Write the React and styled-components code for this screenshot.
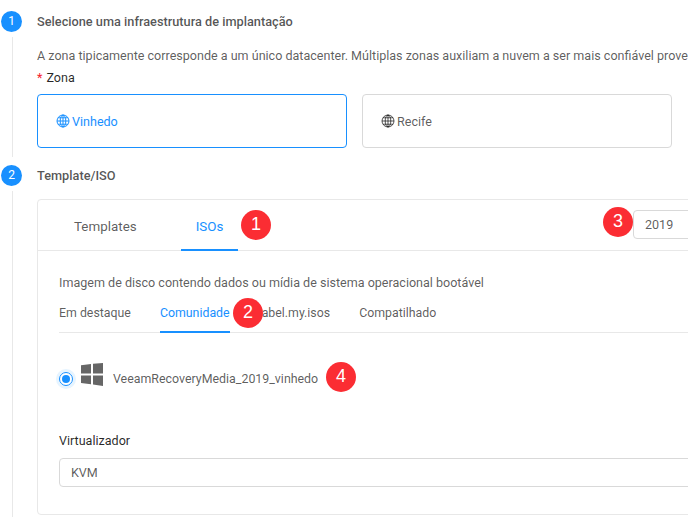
import React from "react";
import styled, { createGlobalStyle } from "styled-components";

const GlobalStyle = createGlobalStyle`
  html, body {
    margin: 0;
    padding: 0;
    background: #fff;
    overflow: hidden;
  }
  body {
    font-family: Roboto, "Open Sans", sans-serif;
    font-size: 12.55px;
    color: rgba(0, 0, 0, 0.65);
  }
`;

const Page = styled.div`
  position: relative;
  width: 688px;
  height: 517px;
  overflow: hidden;
  padding: 11px 0 0 1px;
  box-sizing: border-box;
`;

const Step = styled.div`
  display: flex;
  gap: 15px;
  height: ${(p) => p.$height}px;
`;

const Rail = styled.div`
  display: flex;
  flex-direction: column;
  align-items: center;
  width: 21px;
  flex: none;
`;

const StepDot = styled.div`
  width: 21px;
  height: 21px;
  border-radius: 50%;
  background: #1890ff;
  color: #fff;
  font-size: 12px;
  line-height: 21px;
  text-align: center;
  flex: none;
`;

const RailLine = styled.div`
  width: 1px;
  flex: 1;
  margin: 5px 0 8px 2px;
  background: #e8e8e8;
`;

const StepBody = styled.div`
  flex: none;
  width: 860px;
`;

const StepTitle = styled.div`
  font-weight: 500;
  font-size: 12.75px;
  line-height: 21px;
  color: rgba(0, 0, 0, 0.68);
`;

const Description = styled.div`
  margin-top: 13px;
  line-height: 22px;
  white-space: nowrap;
`;

const FieldLabel = styled.div`
  line-height: 22px;
  color: rgba(0, 0, 0, 0.85);
`;

const Required = styled.span`
  color: #f5222d;
  margin-right: 4px;
`;

const ZoneRow = styled.div`
  display: flex;
  gap: 15px;
  margin-top: 5px;
`;

const ZoneCard = styled.div`
  width: 310px;
  height: 54px;
  box-sizing: border-box;
  display: flex;
  align-items: center;
  gap: 2px;
  padding-left: 18px;
  border: 1px solid ${(p) => (p.$active ? "#1890ff" : "#d9d9d9")};
  border-radius: 4px;
  color: ${(p) => (p.$active ? "#1890ff" : "rgba(0, 0, 0, 0.65)")};
`;

const Card = styled.div`
  margin-top: 13px;
  width: 860px;
  height: 316px;
  box-sizing: border-box;
  border: 1px solid #e8e8e8;
  border-radius: 4px;
`;

const TabBar = styled.div`
  display: flex;
  align-items: flex-start;
  height: 51px;
  box-sizing: border-box;
  padding: 0 23px 0 21px;
  border-bottom: 1px solid #e8e8e8;
`;

const MainTab = styled.div`
  height: 51px;
  box-sizing: border-box;
  padding: 0 15px;
  margin-right: 29px;
  line-height: 53px;
  font-size: 13.4px;
  border-bottom: 2px solid ${(p) => (p.$active ? "#1890ff" : "transparent")};
  color: ${(p) => (p.$active ? "#1890ff" : "rgba(0, 0, 0, 0.65)")};
`;

const YearInput = styled.div`
  margin: 10px 0 0 auto;
  width: 240px;
  height: 29px;
  box-sizing: border-box;
  padding-left: 11px;
  line-height: 27px;
  border: 1px solid #d9d9d9;
  border-radius: 4px;
`;

const CardBody = styled.div`
  padding: 21px 23px 0 21px;
`;

const CardText = styled.div`
  line-height: 22px;
`;

const SubTabs = styled.div`
  display: flex;
  gap: 29px;
  height: 39px;
  box-sizing: border-box;
  border-bottom: 1px solid #e8e8e8;
  font-size: 12.35px;
`;

const SubTab = styled.div`
  height: 39px;
  box-sizing: border-box;
  line-height: 39px;
  border-bottom: 2px solid ${(p) => (p.$active ? "#1890ff" : "transparent")};
  color: ${(p) => (p.$active ? "#1890ff" : "rgba(0, 0, 0, 0.65)")};
`;

const IsoRow = styled.div`
  display: flex;
  align-items: flex-start;
  margin-top: 30px;
`;

const Radio = styled.span`
  width: 14px;
  height: 14px;
  margin: 9px 8px 0 0;
  flex: none;
  box-sizing: border-box;
  border: 1.5px solid #1890ff;
  border-radius: 50%;
  box-shadow: 0 0 0 3px #e6f4ff;
  display: flex;
  align-items: center;
  justify-content: center;
  &::after {
    content: "";
    width: 8px;
    height: 8px;
    border-radius: 50%;
    background: #1890ff;
  }
`;

const IsoName = styled.span`
  margin: 5px 0 0 10px;
  line-height: 22px;
  font-size: 12.4px;
`;

const VirtLabel = styled(FieldLabel)`
  margin-top: 40px;
`;

const SelectBox = styled.div`
  margin-top: 6px;
  height: 29px;
  box-sizing: border-box;
  padding-left: 11px;
  line-height: 28px;
  border: 1px solid #d9d9d9;
  border-radius: 4px;
`;

const Badge = styled.div`
  position: absolute;
  left: ${(p) => p.$x - 15}px;
  top: ${(p) => p.$y - 15}px;
  width: 30px;
  height: 30px;
  border-radius: 50%;
  background: #fb2d33;
  color: #fff;
  font-family: "Liberation Sans", Arial, sans-serif;
  font-size: 18px;
  line-height: 28px;
  text-align: center;
`;

const Globe = () => (
  <svg width="14" height="14" viewBox="0 0 14 14" fill="none" stroke="currentColor" strokeWidth="1">
    <circle cx="7" cy="7" r="6" />
    <ellipse cx="7" cy="7" rx="2.8" ry="6" />
    <path d="M7 1v12M1 7h12M2 3.8h10M2 10.2h10" />
  </svg>
);

const WindowsLogo = () => (
  <svg width="22" height="23" viewBox="0 0 22 23" fill="#666">
    <polygon points="0,2.3 10,1 10,10.5 0,10.5" />
    <polygon points="12,0.7 22,0 22,10.5 12,10.5" />
    <polygon points="0,12.5 10,12.5 10,21.2 0,20" />
    <polygon points="12,12.5 22,12.5 22,23 12,21.5" />
  </svg>
);

export default function App() {
  return (
    <Page>
      <GlobalStyle />
      <Step $height={154}>
        <Rail>
          <StepDot>1</StepDot>
          <RailLine />
        </Rail>
        <StepBody>
          <StepTitle>Selecione uma infraestrutura de implantação</StepTitle>
          <Description>
            A zona tipicamente corresponde a um único datacenter. Múltiplas zonas auxiliam a nuvem a ser mais confiável provendo isolamento físico e redundância.
          </Description>
          <FieldLabel>
            <Required>*</Required>Zona
          </FieldLabel>
          <ZoneRow>
            <ZoneCard $active>
              <Globe />
              Vinhedo
            </ZoneCard>
            <ZoneCard>
              <Globe />
              Recife
            </ZoneCard>
          </ZoneRow>
        </StepBody>
      </Step>
      <Step $height={365}>
        <Rail>
          <StepDot>2</StepDot>
          <RailLine />
        </Rail>
        <StepBody>
          <StepTitle>Template/ISO</StepTitle>
          <Card>
            <TabBar>
              <MainTab>Templates</MainTab>
              <MainTab $active>ISOs</MainTab>
              <YearInput>2019</YearInput>
            </TabBar>
            <CardBody>
              <CardText>Imagem de disco contendo dados ou mídia de sistema operacional bootável</CardText>
              <SubTabs>
                <SubTab>Em destaque</SubTab>
                <SubTab $active>Comunidade</SubTab>
                <SubTab>label.my.isos</SubTab>
                <SubTab>Compatilhado</SubTab>
              </SubTabs>
              <IsoRow>
                <Radio />
                <WindowsLogo />
                <IsoName>VeeamRecoveryMedia_2019_vinhedo</IsoName>
              </IsoRow>
              <VirtLabel>Virtualizador</VirtLabel>
              <SelectBox>KVM</SelectBox>
            </CardBody>
          </Card>
        </StepBody>
      </Step>
      <Badge $x={256} $y={225}>1</Badge>
      <Badge $x={248} $y={313}>2</Badge>
      <Badge $x={618} $y={222}>3</Badge>
      <Badge $x={341} $y={377}>4</Badge>
    </Page>
  );
}
